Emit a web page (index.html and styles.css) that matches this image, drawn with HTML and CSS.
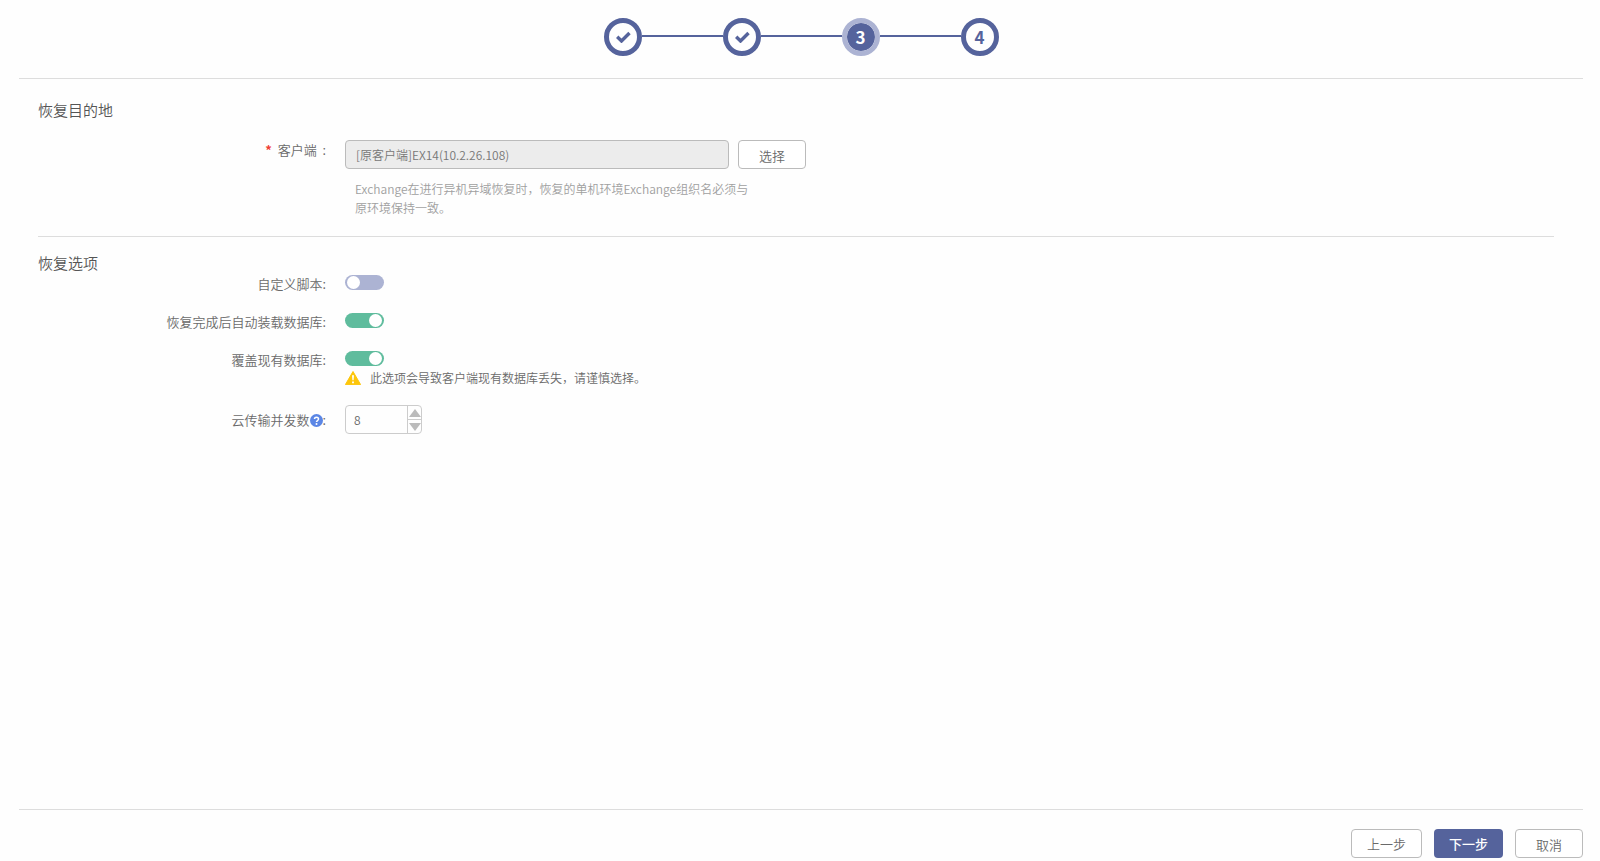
FILE: index.html
```
<!DOCTYPE html>
<html lang="zh-CN">
<head>
    <meta charset="UTF-8">
    <meta name="viewport" content="width=device-width, initial-scale=1.0">
    <title>恢复选项</title>
    <link rel="stylesheet" href="styles.css">
</head>
<body>
    <form class="wizard">
        <!-- 步骤条 -->
        <ol class="steps">
            <li class="step">
                <svg width="16" height="14" viewBox="0 0 16 14"><path d="M2.2 7.8l4.3 4.2 8-8" fill="none" stroke="#55639c" stroke-width="3.4"/></svg>
            </li>
            <li class="step">
                <svg width="16" height="14" viewBox="0 0 16 14"><path d="M2.2 7.8l4.3 4.2 8-8" fill="none" stroke="#55639c" stroke-width="3.4"/></svg>
            </li>
            <li class="step active">3</li>
            <li class="step">4</li>
        </ol>

        <main class="content">
            <!-- 恢复目的地 -->
            <section class="section">
                <h2>恢复目的地</h2>
                <div class="row client-row">
                    <label for="client"><span class="required">*</span>&nbsp; 客户端&nbsp; :</label>
                    <div class="control">
                        <div class="inline">
                            <input type="text" id="client" class="text-input" value="[原客户端]EX14(10.2.26.108)" readonly>
                            <button type="button" class="btn">选择</button>
                        </div>
                        <p class="hint">Exchange在进行异机异域恢复时，恢复的单机环境Exchange组织名必须与原环境保持一致。</p>
                    </div>
                </div>
            </section>

            <!-- 恢复选项 -->
            <section class="section">
                <h2>恢复选项</h2>
                <div class="options">
                    <div class="row">
                        <label for="script">自定义脚本:</label>
                        <div class="control"><input type="checkbox" id="script" class="switch"></div>
                    </div>
                    <div class="row">
                        <label for="mount">恢复完成后自动装载数据库:</label>
                        <div class="control"><input type="checkbox" id="mount" class="switch" checked></div>
                    </div>
                    <div class="row">
                        <label for="overwrite">覆盖现有数据库:</label>
                        <div class="control">
                            <input type="checkbox" id="overwrite" class="switch" checked>
                            <p class="warning">
                                <svg width="16" height="14" viewBox="0 0 16 14"><path d="M8 .5L15.6 13.6H.4z" fill="#fdc60b" stroke="#fdc60b" stroke-linejoin="round"/><path d="M7 4.2h2l-.4 5H7.4zM7.1 10.4h1.8v1.8H7.1z" fill="#fff"/></svg>
                                此选项会导致客户端现有数据库丢失，请谨慎选择。
                            </p>
                        </div>
                    </div>
                    <div class="row number-row">
                        <label for="concurrency">云传输并发数<svg class="help" width="13" height="13" viewBox="0 0 13 13"><circle cx="6.5" cy="6.5" r="6.5" fill="#5b86e5"/><path d="M4.5 5.1c0-2.6 4-2.6 4 0 0 1.5-2 1.4-2 2.9" fill="none" stroke="#fff" stroke-width="1.5"/><circle cx="6.5" cy="9.9" r="1" fill="#fff"/></svg>:</label>
                        <div class="control">
                            <div class="spinner">
                                <input type="number" id="concurrency" value="8" min="1">
                                <div class="spinner-buttons">
                                    <button type="button" id="stepUp" aria-label="增加"><svg width="12" height="8" viewBox="0 0 12 8"><path d="M6 0l6 8H0z" fill="#bbb"/></svg></button>
                                    <button type="button" id="stepDown" aria-label="减少"><svg width="12" height="8" viewBox="0 0 12 8"><path d="M0 0h12L6 8z" fill="#bbb"/></svg></button>
                                </div>
                            </div>
                        </div>
                    </div>
                </div>
            </section>
        </main>

        <!-- 底部按钮 -->
        <footer class="footer">
            <button type="button" class="btn">上一步</button>
            <button type="button" class="btn primary">下一步</button>
            <button type="button" class="btn">取消</button>
        </footer>
    </form>

    <script>
        var concurrency = document.getElementById('concurrency');
        document.getElementById('stepUp').addEventListener('click', function() {
            concurrency.stepUp();
        });
        document.getElementById('stepDown').addEventListener('click', function() {
            concurrency.stepDown();
        });
    </script>
</body>
</html>
```
FILE: styles.css
```
* {
    box-sizing: border-box;
}

body {
    margin: 0;
    font-family: "Noto Sans CJK SC", sans-serif;
    font-size: 13px;
    font-weight: 350;
    line-height: 19px;
    color: #6a6a6a;
    background-color: #fefefe;
}

h2, p {
    margin: 0;
    font-weight: inherit;
}

input, button {
    font: inherit;
    color: inherit;
}

.wizard {
    display: flex;
    flex-direction: column;
    min-height: 100vh;
    padding: 0 17px 0 19px;
}

/* 步骤条 */
.steps {
    display: flex;
    justify-content: center;
    gap: 81px;
    margin: 0;
    padding: 18px 0 22px;
    border-bottom: 1px solid #ddd;
    list-style: none;
}

.step {
    position: relative;
    display: flex;
    align-items: center;
    justify-content: center;
    width: 38px;
    height: 38px;
    padding-bottom: 2px;
    border: 5px solid #55639c;
    border-radius: 50%;
    font-size: 17px;
    font-weight: 700;
    color: #55639c;
}

/* 步骤之间的连线 */
.step:not(:last-child)::after {
    content: "";
    position: absolute;
    left: 33px;
    top: 12px;
    width: 81px;
    height: 2px;
    background-color: #55639c;
}

.step.active {
    border-color: #acb3d3;
    background-color: #55639c;
    background-clip: padding-box;
    color: white;
}

/* 表单内容 */
.content {
    flex: 1;
    padding: 0 29px 0 19px;
}

.section {
    padding: 20px 0 19px;
}

.section + .section {
    padding-top: 15px;
    border-top: 1px solid #ddd;
}

h2 {
    font-size: 15px;
    line-height: 22px;
    color: #555;
}

.row {
    display: grid;
    grid-template-columns: 288px 1fr;
    gap: 19px;
    min-height: 38px;
}

.row > label {
    text-align: right;
}

.client-row {
    padding-top: 19px;
}

.required {
    font-weight: 700;
    color: #f04134;
}

.inline {
    display: flex;
    gap: 9px;
}

.text-input {
    width: 24vw;
    height: 29px;
    padding: 0 10px;
    border: 1px solid #bbb;
    border-radius: 4px;
    font-size: 12px;
    color: #777;
    background-color: #ececec;
}

.hint {
    width: 34%;
    margin-top: 10px;
    padding-left: 10px;
    font-size: 12px;
    color: #a0a0a0;
}

/* 开关 */
.options .control {
    display: flex;
    flex-direction: column;
    align-items: flex-start;
    padding-top: 1px;
}

.switch {
    appearance: none;
    display: flex;
    width: 39px;
    height: 15px;
    margin: 0;
    padding: 1px 2px;
    border-radius: 8px;
    background-color: #acb3d3;
    cursor: pointer;
}

.switch::before {
    content: "";
    width: 13px;
    height: 13px;
    border-radius: 50%;
    background-color: white;
}

.switch:checked {
    justify-content: flex-end;
    background-color: #5fbc9d;
}

.warning {
    display: flex;
    align-items: center;
    gap: 9px;
    margin-top: 2px;
    font-size: 12px;
}

/* 数字输入框 */
.number-row {
    padding-top: 16px;
    align-items: center;
}

.help {
    vertical-align: -2px;
}

.spinner {
    display: flex;
    width: 77px;
    height: 29px;
    border: 1px solid #ccc;
    border-radius: 4px;
}

.spinner input {
    flex: 1;
    min-width: 0;
    padding: 0 8px;
    border: none;
    background: none;
    font-size: 12px;
    appearance: textfield;
}

.spinner input::-webkit-inner-spin-button {
    appearance: none;
}

.spinner-buttons {
    display: flex;
    flex-direction: column;
    width: 14px;
    border-left: 1px solid #ccc;
}

.spinner-buttons button {
    display: flex;
    flex: 1;
    align-items: center;
    justify-content: center;
    padding: 0;
    border: none;
    background: none;
}

.spinner-buttons button + button {
    border-top: 1px solid #ccc;
}

/* 按钮 */
.btn {
    height: 29px;
    padding: 1px 20px 0;
    border: 1px solid #bbb;
    border-radius: 4px;
    background-color: white;
    cursor: pointer;
}

.footer {
    display: flex;
    justify-content: flex-end;
    gap: 12px;
    padding: 19px 0 3px;
    border-top: 1px solid #ddd;
}

.footer .btn:not(:last-child) {
    padding: 0 15px;
}

.footer .btn.primary {
    border: none;
    font-weight: 500;
    color: white;
    background-color: #55639c;
}
```
